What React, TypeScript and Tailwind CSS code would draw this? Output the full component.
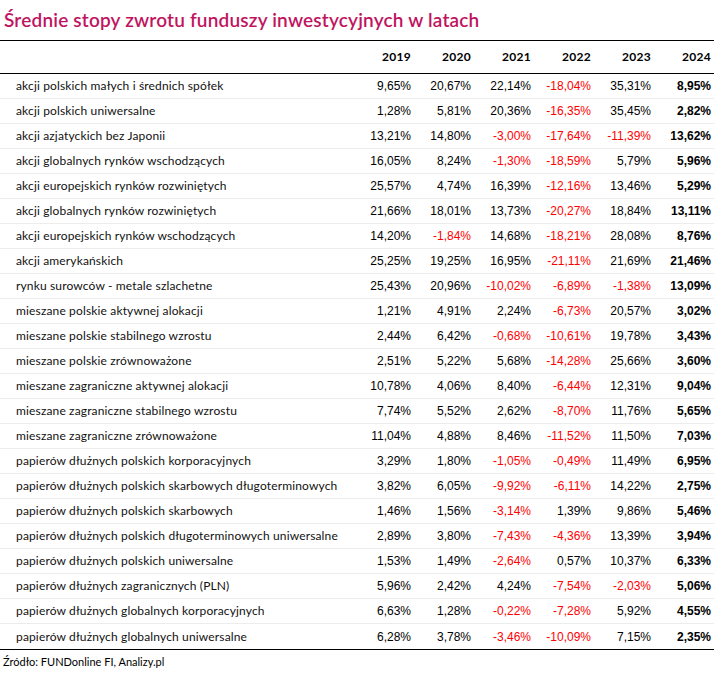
import React from "react";

type Row = [string, string, string, string, string, string, string];

const rows: Row[] = [
  ["akcji polskich małych i średnich spółek", "9,65%", "20,67%", "22,14%", "-18,04%", "35,31%", "8,95%"],
  ["akcji polskich uniwersalne", "1,28%", "5,81%", "20,36%", "-16,35%", "35,45%", "2,82%"],
  ["akcji azjatyckich bez Japonii", "13,21%", "14,80%", "-3,00%", "-17,64%", "-11,39%", "13,62%"],
  ["akcji globalnych rynków wschodzących", "16,05%", "8,24%", "-1,30%", "-18,59%", "5,79%", "5,96%"],
  ["akcji europejskich rynków rozwiniętych", "25,57%", "4,74%", "16,39%", "-12,16%", "13,46%", "5,29%"],
  ["akcji globalnych rynków rozwiniętych", "21,66%", "18,01%", "13,73%", "-20,27%", "18,84%", "13,11%"],
  ["akcji europejskich rynków wschodzących", "14,20%", "-1,84%", "14,68%", "-18,21%", "28,08%", "8,76%"],
  ["akcji amerykańskich", "25,25%", "19,25%", "16,95%", "-21,11%", "21,69%", "21,46%"],
  ["rynku surowców - metale szlachetne", "25,43%", "20,96%", "-10,02%", "-6,89%", "-1,38%", "13,09%"],
  ["mieszane polskie aktywnej alokacji", "1,21%", "4,91%", "2,24%", "-6,73%", "20,57%", "3,02%"],
  ["mieszane polskie stabilnego wzrostu", "2,44%", "6,42%", "-0,68%", "-10,61%", "19,78%", "3,43%"],
  ["mieszane polskie zrównoważone", "2,51%", "5,22%", "5,68%", "-14,28%", "25,66%", "3,60%"],
  ["mieszane zagraniczne aktywnej alokacji", "10,78%", "4,06%", "8,40%", "-6,44%", "12,31%", "9,04%"],
  ["mieszane zagraniczne stabilnego wzrostu", "7,74%", "5,52%", "2,62%", "-8,70%", "11,76%", "5,65%"],
  ["mieszane zagraniczne zrównoważone", "11,04%", "4,88%", "8,46%", "-11,52%", "11,50%", "7,03%"],
  ["papierów dłużnych polskich korporacyjnych", "3,29%", "1,80%", "-1,05%", "-0,49%", "11,49%", "6,95%"],
  ["papierów dłużnych polskich skarbowych długoterminowych", "3,82%", "6,05%", "-9,92%", "-6,11%", "14,22%", "2,75%"],
  ["papierów dłużnych polskich skarbowych", "1,46%", "1,56%", "-3,14%", "1,39%", "9,86%", "5,46%"],
  ["papierów dłużnych polskich długoterminowych uniwersalne", "2,89%", "3,80%", "-7,43%", "-4,36%", "13,39%", "3,94%"],
  ["papierów dłużnych polskich uniwersalne", "1,53%", "1,49%", "-2,64%", "0,57%", "10,37%", "6,33%"],
  ["papierów dłużnych zagranicznych (PLN)", "5,96%", "2,42%", "4,24%", "-7,54%", "-2,03%", "5,06%"],
  ["papierów dłużnych globalnych korporacyjnych", "6,63%", "1,28%", "-0,22%", "-7,28%", "5,92%", "4,55%"],
  ["papierów dłużnych globalnych uniwersalne", "6,28%", "3,78%", "-3,46%", "-10,09%", "7,15%", "2,35%"],
];

const years = ["2019", "2020", "2021", "2022", "2023", "2024"];

const geo = "font-['Lato','Noto_Sans',sans-serif]";
const arial = "font-['Liberation_Sans',Arial,sans-serif]";

export default function App() {
  return (
    <div className="w-[714px] h-[674px] bg-white text-black overflow-hidden">
      <h1
        className={`${geo} h-[40px] pl-[4px] pt-[8px] text-[19px] leading-[24px] font-semibold tracking-[0.19px] text-[#c0145f]`}
      >
        Średnie stopy zwrotu funduszy inwestycyjnych w latach
      </h1>
      <div className="border-t border-b border-black">
        <div className="grid grid-cols-[1fr_60px_60px_60px_60px_60px_60px] pr-[3px] h-[32px] items-center">
          <div />
          {years.map((y) => (
            <div key={y} className={`${geo} text-right text-[12px] font-bold tracking-[0.3px]`}>
              {y}
            </div>
          ))}
        </div>
      </div>
      <div className="border-b border-black">
        {rows.map((r, i) => (
          <div
            key={i}
            className={`grid grid-cols-[1fr_60px_60px_60px_60px_60px_60px] pr-[3px] h-[25px] items-center ${
              i < rows.length - 1 ? "border-b border-[#ececec]" : ""
            }`}
          >
            <div className={`${geo} pl-[16px] text-[12px] tracking-[0.15px] text-[#111]`}>{r[0]}</div>
            {r.slice(1).map((v, j) => (
              <div
                key={j}
                className={`${arial} text-right text-[12px] ${
                  j === 5 ? "font-bold text-black" : v.startsWith("-") ? "text-[#ff0000]" : "text-black"
                }`}
              >
                {v}
              </div>
            ))}
          </div>
        ))}
      </div>
      <div className={`${geo} pl-[3px] pt-[5px] text-[11px] leading-[14px] text-black`}>
        Źródło: FUNDonline FI, Analizy.pl
      </div>
    </div>
  );
}
